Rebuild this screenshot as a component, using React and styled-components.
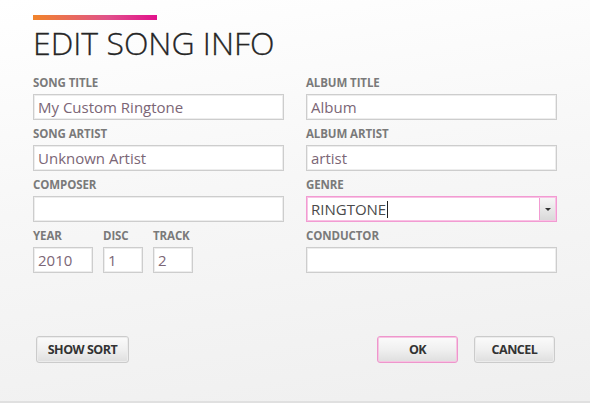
import React from "react";
import styled, { createGlobalStyle } from "styled-components";

const GlobalStyle = createGlobalStyle`
  html, body {
    margin: 0;
    padding: 0;
  }
  body {
    font-family: "Open Sans", "Noto Sans", sans-serif;
  }
`;

const Dialog = styled.div`
  width: 590px;
  height: 403px;
  box-sizing: border-box;
  padding: 15px 33px 0 33px;
  background: linear-gradient(172deg, #ffffff 0%, #f7f7f7 45%, #efefef 100%);
  border-bottom: 2px solid #e0e0e0;
  display: flex;
  flex-direction: column;
  overflow: hidden;
`;

const AccentBar = styled.div`
  width: 124px;
  height: 5px;
  background: linear-gradient(90deg, #f1842a 0%, #e0528a 60%, #e2118c 100%);
`;

const Title = styled.h1`
  margin: 3px 0 0 0;
  font-size: 32px;
  line-height: 40px;
  font-weight: 300;
  color: #262626;
  letter-spacing: 0;
  -webkit-text-stroke: 0.3px #262626;
`;

const Columns = styled.div`
  margin-top: 13px;
  display: grid;
  grid-template-columns: 251px 251px;
  column-gap: 22px;
`;

const Column = styled.div`
  display: flex;
  flex-direction: column;
  gap: 7px;
`;

const Field = styled.div`
  display: flex;
  flex-direction: column;
  width: ${(p) => (p.$width ? `${p.$width}px` : "auto")};
`;

const Label = styled.div`
  font-size: 11.5px;
  line-height: 14px;
  font-weight: 700;
  color: #7a7a7a;
  margin-bottom: 4px;
  letter-spacing: -0.1px;
`;

const Box = styled.div`
  height: 26px;
  box-sizing: border-box;
  border: 1px solid ${(p) => (p.$focus ? "#f29bd2" : "#cdcdcd")};
  box-shadow: inset 0 0 0 1px ${(p) => (p.$focus ? "#f8c2e4" : "#ededed")};
  background: #ffffff;
  display: flex;
  align-items: center;
  padding-left: 4px;
  font-size: 15px;
  color: ${(p) => (p.$dark ? "#4a4a4a" : "#7b6676")};
`;

const ComboText = styled.div`
  flex: 1;
  display: flex;
  align-items: center;
`;

const Caret = styled.span`
  display: inline-block;
  width: 1px;
  height: 17px;
  background: #222;
  margin-left: 1px;
`;

const DropButton = styled.div`
  width: 15px;
  align-self: stretch;
  margin: 1px 1px 1px 0;
  border-left: 1px solid #f29bd2;
  background: linear-gradient(#f6f6f6, #d9d9d9);
  display: flex;
  align-items: center;
  justify-content: center;
`;

const Arrow = styled.span`
  width: 0;
  height: 0;
  border-left: 3px solid transparent;
  border-right: 3px solid transparent;
  border-top: 3px solid #333;
`;

const SmallRow = styled.div`
  display: flex;
  gap: 10px;
`;

const Footer = styled.div`
  margin-top: 63px;
  display: flex;
  align-items: center;
  padding-left: 3px;
  padding-right: 2px;
`;

const Spacer = styled.div`
  flex: 1;
`;

const Button = styled.button`
  height: 27px;
  width: ${(p) => p.$width}px;
  box-sizing: border-box;
  margin-left: ${(p) => p.$gap || 0}px;
  border: 1px solid ${(p) => (p.$primary ? "#ee96cc" : "#cbcbcb")};
  box-shadow: inset 0 0 0 1px ${(p) => (p.$primary ? "#f6c4e2" : "#ececec")};
  border-radius: 3px;
  background: linear-gradient(#fbfbfb 0%, #f0f0f0 50%, #dedede 100%);
  font-family: "Open Sans", "Noto Sans", sans-serif;
  font-size: 12.5px;
  font-weight: 700;
  color: #333;
  letter-spacing: -0.5px;
  padding: 0;
  cursor: pointer;
`;

const App = () => {
  return (
    <>
      <GlobalStyle />
      <Dialog>
        <AccentBar />
        <Title>EDIT SONG INFO</Title>
        <Columns>
          <Column>
            <Field>
              <Label>SONG TITLE</Label>
              <Box>My Custom Ringtone</Box>
            </Field>
            <Field>
              <Label>SONG ARTIST</Label>
              <Box>Unknown Artist</Box>
            </Field>
            <Field>
              <Label>COMPOSER</Label>
              <Box />
            </Field>
            <SmallRow>
              <Field $width={60}>
                <Label>YEAR</Label>
                <Box>2010</Box>
              </Field>
              <Field $width={40}>
                <Label>DISC</Label>
                <Box>1</Box>
              </Field>
              <Field $width={40}>
                <Label>TRACK</Label>
                <Box>2</Box>
              </Field>
            </SmallRow>
          </Column>
          <Column>
            <Field>
              <Label>ALBUM TITLE</Label>
              <Box>Album</Box>
            </Field>
            <Field>
              <Label>ALBUM ARTIST</Label>
              <Box>artist</Box>
            </Field>
            <Field>
              <Label>GENRE</Label>
              <Box $focus $dark>
                <ComboText>
                  RINGTONE
                  <Caret />
                </ComboText>
                <DropButton>
                  <Arrow />
                </DropButton>
              </Box>
            </Field>
            <Field>
              <Label>CONDUCTOR</Label>
              <Box />
            </Field>
          </Column>
        </Columns>
        <Footer>
          <Button $width={93}>SHOW SORT</Button>
          <Spacer />
          <Button $width={81} $primary>
            OK
          </Button>
          <Button $width={81} $gap={16}>
            CANCEL
          </Button>
        </Footer>
      </Dialog>
    </>
  );
};

export default App;
